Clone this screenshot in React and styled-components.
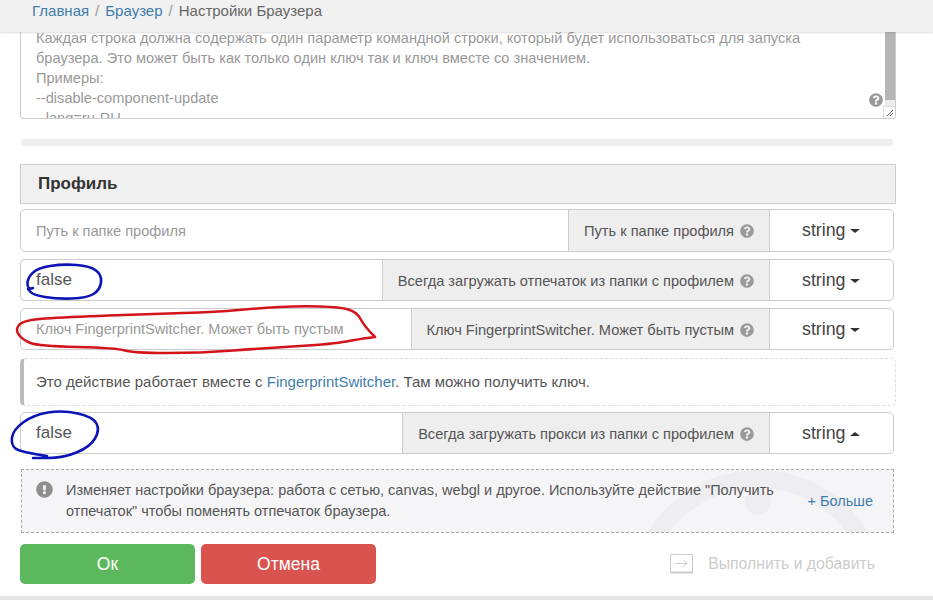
import React from "react";
import styled, { createGlobalStyle } from "styled-components";
import { FaQuestionCircle, FaExclamationCircle } from "react-icons/fa";

const Global = createGlobalStyle`
  html, body { margin: 0; padding: 0; background: #fff; }
  * { box-sizing: border-box; }
`;

const Page = styled.div`
  position: relative;
  width: 933px;
  height: 600px;
  overflow: hidden;
  display: flex;
  flex-direction: column;
  font-family: "Liberation Sans", Arial, sans-serif;
  font-size: 14.6px;
  color: #555;
  background: #fff;
`;

const Crumbs = styled.nav`
  position: relative;
  z-index: 1;
  flex: none;
  height: 32px;
  padding: 2px 0 0 32px;
  background: #f1f1f1;
  box-shadow: 0 1px 2px rgba(0, 0, 0, 0.14);
  font-size: 15px;
  line-height: 18px;
  color: #666;
`;

const Crumb = styled.a`
  color: #3f7dac;
`;

const Sep = styled.span`
  color: #999;
  padding: 0 6px;
`;

const Content = styled.main`
  flex: none;
  width: 876px;
  margin-left: 20px;
`;

const ArgsBox = styled.div`
  position: relative;
  height: 87px;
  overflow: hidden;
  border: 1px solid #ccc;
  border-top: 0;
  border-radius: 0 0 4px 4px;
  padding: 0 15px;
  color: #999;
  line-height: 20px;
`;

const ArgsLine = styled.div`
  white-space: nowrap;
  margin-top: ${(p) => (p.$first ? "-4px" : "0")};
`;

const ScrollTrack = styled.div`
  position: absolute;
  top: 0;
  right: 0;
  bottom: 0;
  width: 10px;
  background: #ececec;
`;

const ScrollThumb = styled.div`
  height: 68px;
  background: #b5b5b5;
`;

const Grip = styled.div`
  position: absolute;
  right: 0;
  bottom: 0;
  width: 12px;
  height: 12px;
  background: #fff;
  border: 1px solid #ddd;
  border-width: 1px 0 0 1px;
  display: flex;
`;

const ArgsHelp = styled(FaQuestionCircle)`
  position: absolute;
  right: 12px;
  top: 61px;
  width: 14px;
  height: 14px;
  color: #999;
`;

const Divider = styled.div`
  width: 872px;
  height: 7px;
  margin: 20px 0 18px 1px;
  background: #eee;
  border-radius: 2px;
`;

const SectionTitle = styled.h3`
  margin: 0 0 5px;
  height: 40px;
  padding-left: 17px;
  display: flex;
  align-items: center;
  background: #f0f0f0;
  border: 1px solid #ccc;
  font-size: 17px;
  font-weight: 700;
  color: #333;
`;

const Row = styled.div`
  display: flex;
  width: 874px;
  height: ${(p) => p.$h || 42}px;
  margin-bottom: ${(p) => p.$mb ?? 7}px;
  border: 1px solid #ccc;
  border-radius: 5px;
  overflow: hidden;
  background: #fff;
`;

const Field = styled.input`
  flex: 1;
  min-width: 0;
  border: 0;
  outline: 0;
  background: transparent;
  padding: 0 15px;
  font-family: inherit;
  font-size: ${(p) => (p.$value ? 17 : 14.6)}px;
  color: #555;
  &::placeholder { color: #999; opacity: 1; }
`;

const FieldLabel = styled.div`
  flex: none;
  display: flex;
  align-items: center;
  gap: 6px;
  padding: 1px 15px 0;
  background: #eee;
  border-left: 1px solid #ccc;
  border-right: 1px solid #ccc;
  color: #555;
  white-space: nowrap;
`;

const LabelHelp = styled(FaQuestionCircle)`
  width: 14px;
  height: 14px;
  color: #999;
`;

const TypeSelect = styled.div`
  flex: none;
  width: 123px;
  display: flex;
  align-items: center;
  gap: 5px;
  padding: 0 0 0 32px;
  font-size: 17.8px;
  color: #444;
`;

const Caret = styled.span`
  width: 0;
  height: 0;
  margin-top: 1px;
  border-left: 5px solid transparent;
  border-right: 5px solid transparent;
  border-top: ${(p) => (p.$up ? "0" : "4px solid #333")};
  border-bottom: ${(p) => (p.$up ? "4px solid #333" : "0")};
`;

const Note = styled.div`
  height: 48px;
  margin-bottom: 6px;
  display: flex;
  align-items: center;
  padding: 0 0 2px 12px;
  border: 1px dashed #ddd;
  border-left: 4px solid #bbb;
  border-radius: 5px;
  font-size: 15px;
  color: #555;
`;

const Link = styled.a`
  color: #3f7dac;
`;

const Notice = styled.div`
  position: relative;
  width: 873px;
  height: 64px;
  margin: 15px 0 11px 1px;
  padding: 10px 0 0 44px;
  overflow: hidden;
  border: 1px dashed #aaa;
  background: #f5f5f8;
  color: #555;
  font-size: 14.5px;
  line-height: 21px;
`;

const NoticeText = styled.div`
  position: relative;
  width: 725px;
`;

const NoticeIcon = styled(FaExclamationCircle)`
  position: absolute;
  left: 14px;
  top: 11px;
  width: 17px;
  height: 17px;
  color: #8f8f8f;
`;

const More = styled(Link)`
  position: absolute;
  right: 20px;
  top: 21px;
`;

const Watermark = styled.svg`
  position: absolute;
  left: 600px;
  top: -2px;
  width: 260px;
  height: 66px;
`;

const Actions = styled.div`
  display: flex;
  align-items: center;
  gap: 6px;
  height: 40px;
`;

const Btn = styled.button`
  width: 175px;
  height: 40px;
  border: 0;
  border-radius: 5px;
  background: ${(p) => p.$bg};
  color: #fff;
  font-family: inherit;
  font-size: 17.5px;
`;

const Run = styled.div`
  margin-left: auto;
  margin-right: 21px;
  display: flex;
  align-items: center;
  gap: 15px;
  color: #ccc;
  font-size: 15.8px;
`;

const BottomBar = styled.div`
  position: absolute;
  left: 0;
  right: 0;
  bottom: 0;
  height: 4px;
  background: #e4e4e4;
`;

const Ink = styled.svg`
  position: absolute;
  left: 0;
  top: 0;
  width: 933px;
  height: 600px;
  pointer-events: none;
  z-index: 2;
`;

const smooth = (pts) => {
  let d = `M${pts[0][0]} ${pts[0][1]}`;
  for (let i = 1; i < pts.length - 1; i++) {
    const mx = (pts[i][0] + pts[i + 1][0]) / 2;
    const my = (pts[i][1] + pts[i + 1][1]) / 2;
    d += ` Q${pts[i][0]} ${pts[i][1]} ${mx} ${my}`;
  }
  const l = pts[pts.length - 1];
  return `${d} L${l[0]} ${l[1]}`;
};

const blueA = [[33,288],[28,290],[27,279],[37,268],[63,264],[90,266],[102,275],[100,290],[87,298],[57,299],[33,295],[28,289]];
const blueB = [[47,456],[20,452],[11,445],[13,430],[33,415],[63,410],[93,417],[100,430],[90,447],[63,458],[33,458]];
const red = [[375,337],[364,326],[357,312],[340,307],[300,306],[260,308],[217,312],[150,314],[67,317],[23,320],[15,330],[23,340],[38,346],[117,348],[133,353],[200,353],[267,348],[333,344],[360,339],[375,337]];

const args = [
  "Каждая строка должна содержать один параметр командной строки, который будет использоваться для запуска",
  "браузера. Это может быть как только один ключ так и ключ вместе со значением.",
  "Примеры:",
  "--disable-component-update",
  "--lang=ru-RU",
];

const ParamRow = ({ label, placeholder, value, up, h, mb }) => (
  <Row $h={h} $mb={mb}>
    <Field readOnly $value={!!value} value={value || ""} placeholder={placeholder} />
    <FieldLabel>
      {label}
      <LabelHelp />
    </FieldLabel>
    <TypeSelect>
      string
      <Caret $up={up} />
    </TypeSelect>
  </Row>
);

export default function App() {
  return (
    <Page>
      <Global />
      <Crumbs>
        <Crumb>Главная</Crumb>
        <Sep>/</Sep>
        <Crumb>Браузер</Crumb>
        <Sep>/</Sep>
        Настройки Браузера
      </Crumbs>
      <Content>
        <ArgsBox>
          {args.map((t, i) => (
            <ArgsLine key={t} $first={i === 0}>{t}</ArgsLine>
          ))}
          <ScrollTrack>
            <ScrollThumb />
          </ScrollTrack>
          <Grip>
            <svg width="11" height="11" viewBox="0 0 11 11">
              <path d="M3 9 L9 3 M6 9 L9 6" stroke="#666" strokeWidth="1" />
            </svg>
          </Grip>
          <ArgsHelp />
        </ArgsBox>
        <Divider />
        <SectionTitle>Профиль</SectionTitle>
        <ParamRow h={43} label="Путь к папке профиля" placeholder="Путь к папке профиля" />
        <ParamRow label="Всегда загружать отпечаток из папки с профилем" value="false" />
        <ParamRow
          mb={8}
          label="Ключ FingerprintSwitcher. Может быть пустым"
          placeholder="Ключ FingerprintSwitcher. Может быть пустым"
        />
        <Note>
          <span>
            Это действие работает вместе с <Link>FingerprintSwitcher</Link>. Там можно получить ключ.
          </span>
        </Note>
        <ParamRow mb={0} up label="Всегда загружать прокси из папки с профилем" value="false" />
        <Notice>
          <Watermark viewBox="0 0 260 66">
            <path d="M16 131 A120 120 0 0 1 256 131" fill="none" stroke="#eeeef1" strokeWidth="18" />
            <circle cx="136" cy="34" r="13" fill="#eeeef1" />
          </Watermark>
          <NoticeIcon />
          <NoticeText>
            Изменяет настройки браузера: работа с сетью, canvas, webgl и другое. Используйте действие "Получить отпечаток" чтобы поменять отпечаток браузера.
          </NoticeText>
          <More>+ Больше</More>
        </Notice>
        <Actions>
          <Btn $bg="#5cb85c">Ок</Btn>
          <Btn $bg="#d9534f">Отмена</Btn>
          <Run>
            <svg width="23" height="20" viewBox="0 0 23 20" fill="none">
              <path d="M.5 .5H22.5V18.5H.5Z" stroke="#ccc" />
              <path d="M0 18.5H23" stroke="#ccc" strokeWidth="2" />
              <path d="M5 9.5H17M13 5.5L17 9.5L13 13.5" stroke="#ccc" />
            </svg>
            Выполнить и добавить
          </Run>
        </Actions>
      </Content>
      <BottomBar />
      <Ink viewBox="0 0 933 600" fill="none" strokeLinecap="round" strokeLinejoin="round">
        <path d={smooth(red)} stroke="#d3141a" strokeWidth="2.5" />
        <path d={smooth(blueA)} stroke="#0b14b4" strokeWidth="2.6" />
        <path d={smooth(blueB)} stroke="#0b14b4" strokeWidth="2.6" />
      </Ink>
    </Page>
  );
}
